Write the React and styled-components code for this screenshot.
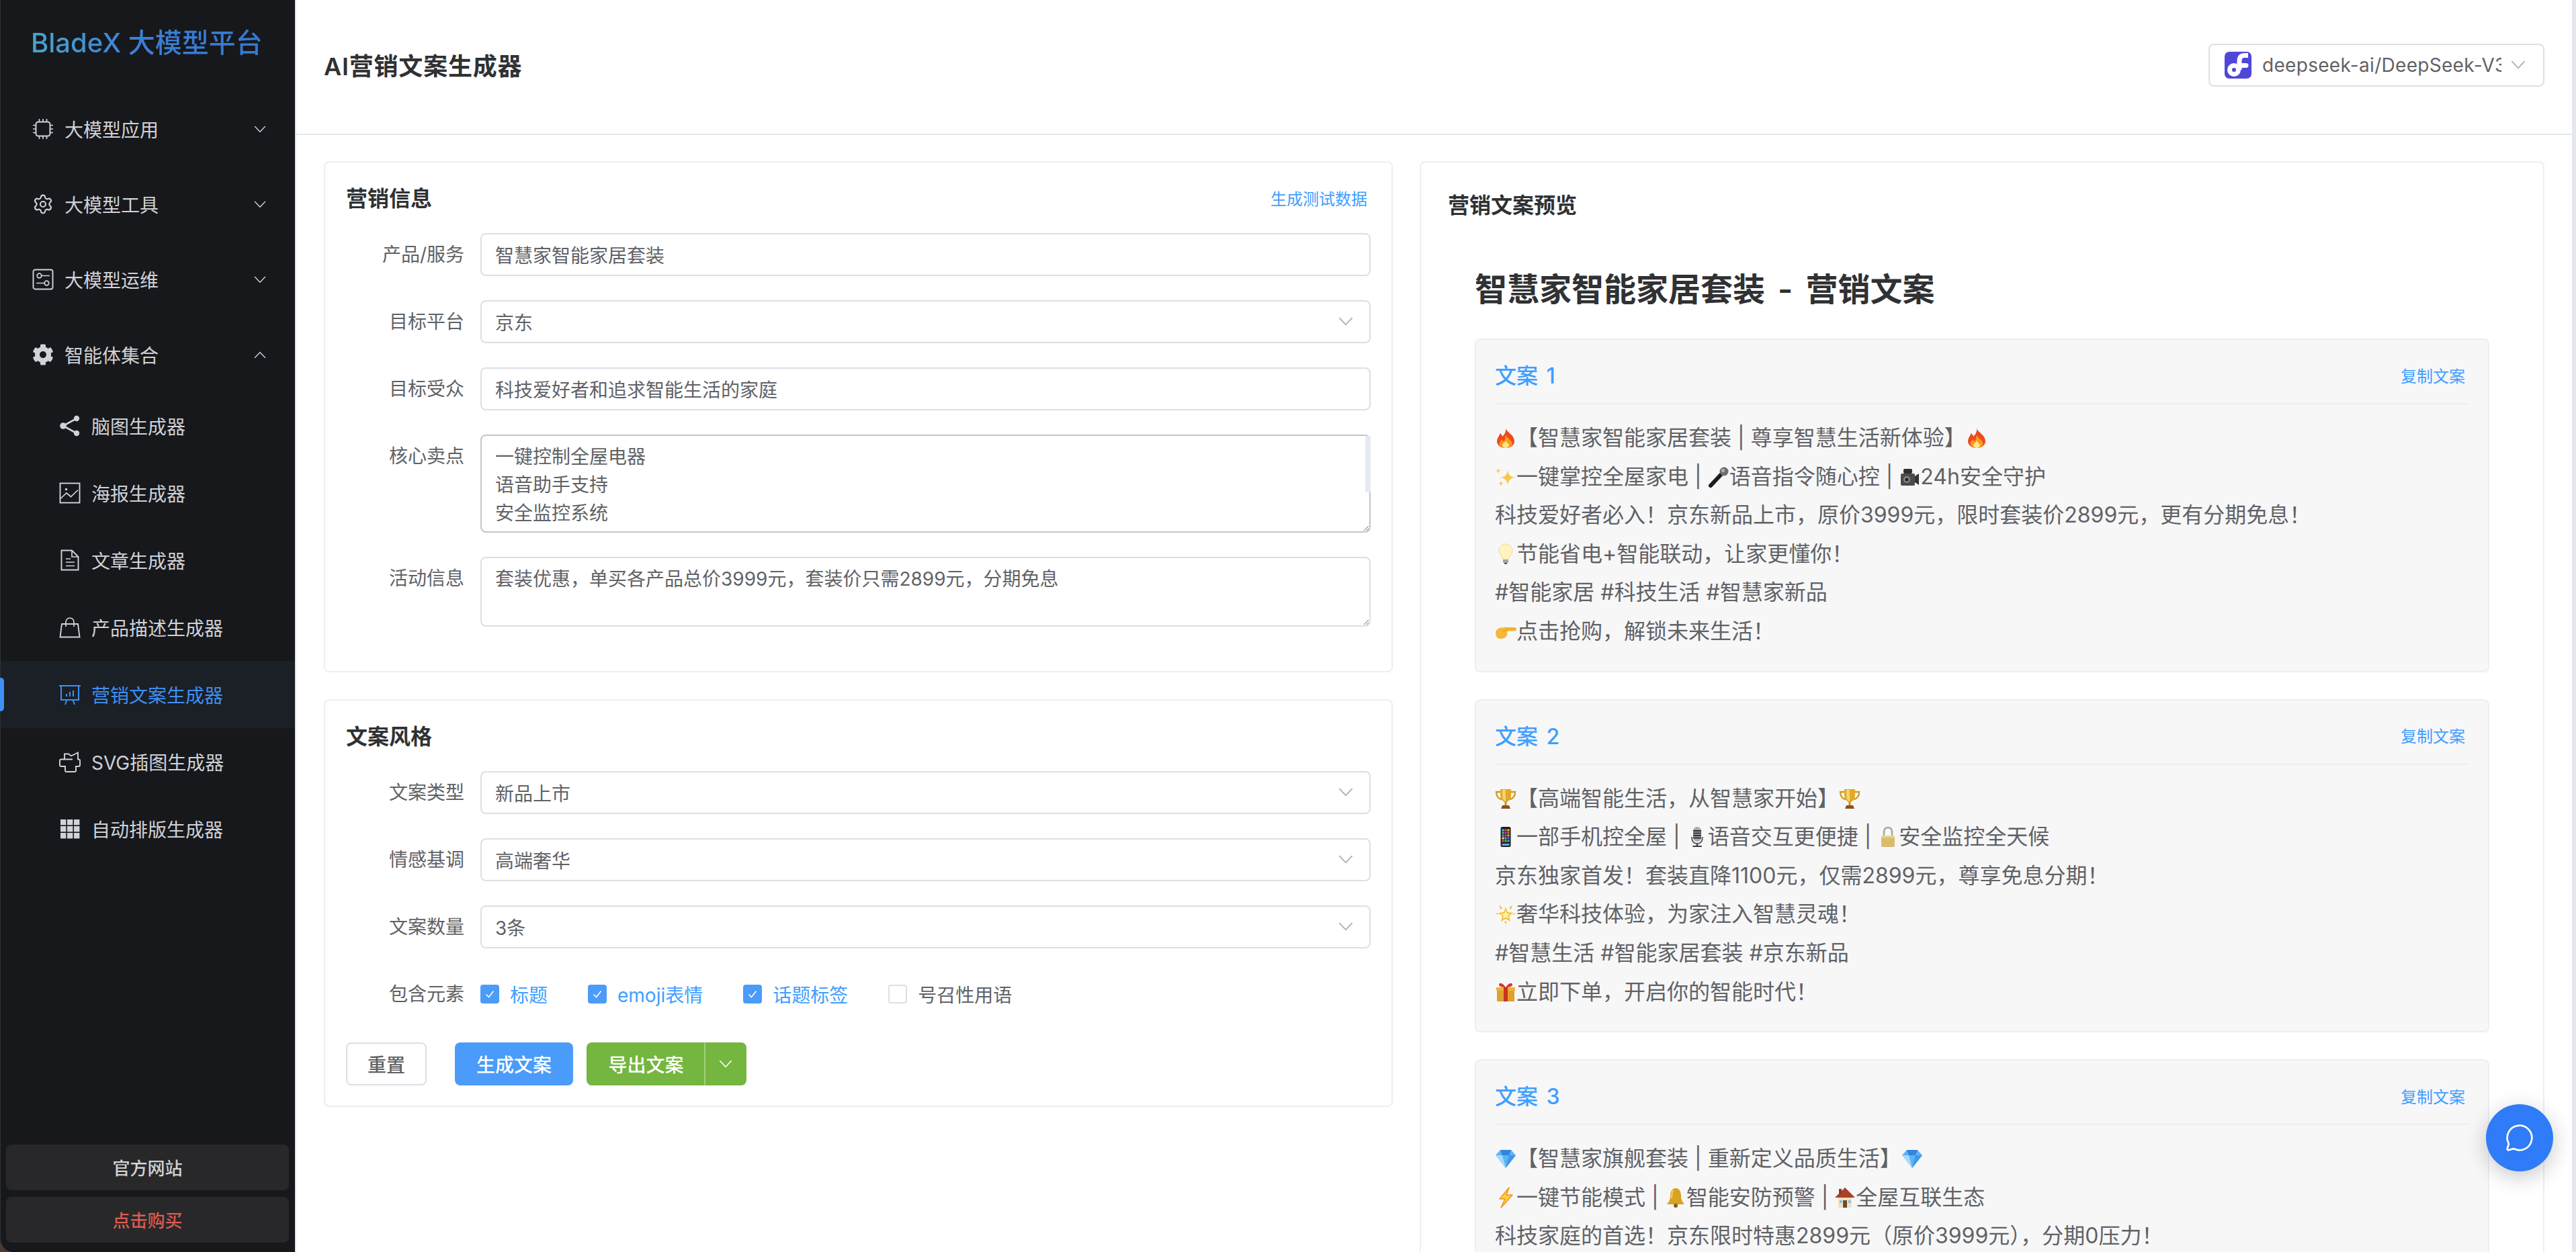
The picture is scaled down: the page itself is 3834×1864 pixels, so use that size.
import React from 'react';
import styled, { createGlobalStyle } from 'styled-components';
import { Settings, MessageCircle } from 'lucide-react';
import { FaCog } from 'react-icons/fa';

const FONT = `Inter, "Noto Sans CJK SC", "Noto Sans", sans-serif`;

const Global = createGlobalStyle`
  html, body { margin: 0; padding: 0; height: 100%; overflow: hidden; background: #fff; }
  body { font-family: ${FONT}; color: #606266; }
  #root { height: 100%; }
  * { box-sizing: border-box; }
`;

const Shell = styled.div`
  display: flex;
  height: 100vh;
  overflow: hidden;
  background: #e4e7ee;
`;
const SideFrame = styled.div`
  flex: 0 0 439px;
  margin-right: 2px;
  background: #4a3a30;
  display: flex;
`;
const Sidebar = styled.aside`
  flex: 1;
  display: flex;
  flex-direction: column;
  background: #17181b;
  border-left: 1px solid #303135;
  border-bottom-left-radius: 20px;
  min-width: 0;
`;
const Logo = styled.div`
  height: 136px;
  padding: 40px 0 0 45px;
  font-size: 40px;
  line-height: 48px;
  font-weight: 500;
  white-space: nowrap;
  span {
    background: linear-gradient(90deg, #4aa5cc 0%, #3b80d6 45%, #3478d2 100%);
    -webkit-background-clip: text;
    background-clip: text;
    color: transparent;
  }
`;
const NavItem = styled.div`
  height: 112px;
  display: flex;
  align-items: center;
  gap: 16px;
  padding: 0 43px 0 47px;
  font-size: 28px;
  color: #cfd2d8;
`;
const SubItem = styled.div`
  position: relative;
  height: 100px;
  display: flex;
  align-items: center;
  gap: 16px;
  padding-left: 87px;
  font-size: 28px;
  color: ${p => (p.$active ? '#3d90f5' : '#cfd2d8')};
  background: ${p => (p.$active ? '#1b1f26' : 'transparent')};
  ${p =>
    p.$active &&
    `&::before {
      content: '';
      position: absolute;
      left: -1px;
      top: 25px;
      width: 6px;
      height: 50px;
      border-radius: 0 5px 5px 0;
      background: #3f8ff7;
    }`}
`;
const NavIcon = styled.span`
  flex: 0 0 32px;
  width: 32px;
  height: 32px;
  display: flex;
  svg { display: block; width: 32px; height: 32px; }
`;
const NavCaret = styled.span`
  margin-left: auto;
  display: flex;
`;
const SideFooter = styled.div`
  margin-top: auto;
  padding: 0 9px 14px 8px;
  display: flex;
  flex-direction: column;
  gap: 10px;
`;
const SideButton = styled.div`
  height: 68px;
  padding-bottom: 2px;
  border-radius: 8px;
  background: #28282b;
  display: flex;
  align-items: center;
  justify-content: center;
  font-size: 26px;
  font-weight: 500;
  color: ${p => (p.$danger ? '#dc5a50' : '#d2d2d2')};
`;

const Main = styled.main`
  flex: 1;
  min-width: 0;
  margin-right: 6px;
  background: #fff;
  display: flex;
  flex-direction: column;
`;
const Header = styled.header`
  flex: 0 0 201px;
  border-bottom: 2px solid #e4e7ee;
  padding: 0 41px;
  display: flex;
  align-items: center;
  justify-content: space-between;
`;
const PageTitle = styled.h1`
  margin: 0 0 2px;
  font-size: 36px;
  line-height: 48px;
  font-weight: 600;
  letter-spacing: 0.8px;
  color: #303133;
`;
const ModelSelect = styled.div`
  width: 500px;
  height: 64px;
  margin-bottom: 6px;
  border: 2px solid #dcdfe6;
  border-radius: 8px;
  display: flex;
  align-items: center;
  padding: 0 26px 0 22px;
  font-size: 28px;
  color: #606266;
`;
const ModelName = styled.span`
  flex: 0 0 356px;
  margin-left: 16px;
  overflow: hidden;
  white-space: nowrap;
  font-size: 28px;
  letter-spacing: 0.3px;
`;
const ModelCaret = styled.span`
  margin-left: auto;
  display: flex;
`;
const Content = styled.div`
  flex: 1;
  min-height: 0;
  padding: 39px 41px 0;
  display: grid;
  grid-template-columns: 1591px minmax(0, 1fr);
  column-gap: 40px;
  align-items: start;
`;
const Column = styled.div`
  display: flex;
  flex-direction: column;
  gap: 40px;
`;
const Card = styled.section`
  border: 2px solid #ebeef5;
  border-radius: 8px;
  background: #fff;
  padding: 30px 31px;
`;
const CardHead = styled.div`
  height: 44px;
  margin-bottom: 31px;
  display: flex;
  align-items: center;
  justify-content: space-between;
`;
const CardTitle = styled.h2`
  margin: 0;
  padding-top: 3px;
  font-size: 32px;
  line-height: 44px;
  font-weight: 600;
  color: #303133;
`;
const LinkText = styled.a`
  font-size: 24px;
  color: #409eff;
  margin-right: ${p => p.$inset || 0}px;
`;
const FormRow = styled.div`
  display: flex;
  align-items: flex-start;
  margin-bottom: ${p => p.$mb ?? 36}px;
`;
const Label = styled.label`
  flex: 0 0 200px;
  padding-right: 24px;
  text-align: right;
  font-size: 28px;
  line-height: 64px;
  color: #606266;
`;
const TextInput = styled.input`
  flex: 1;
  min-width: 0;
  height: 64px;
  border: 2px solid #dcdfe6;
  border-radius: 8px;
  padding: 0 20px;
  font: 28px ${FONT};
  color: #606266;
  background: #fff;
  outline: none;
`;
const SelectBox = styled.div`
  flex: 1;
  min-width: 0;
  height: 64px;
  border: 2px solid #dcdfe6;
  border-radius: 8px;
  padding: 0 24px 0 20px;
  display: flex;
  align-items: center;
  justify-content: space-between;
  font-size: 28px;
  color: #606266;
`;
const AreaWrap = styled.div`
  position: relative;
  flex: 1;
  min-width: 0;
  display: flex;
`;
const TextArea = styled.textarea`
  flex: 1;
  min-width: 0;
  display: block;
  height: ${p => p.$h}px;
  border: 2px solid ${p => p.$border};
  border-radius: 8px;
  padding: 10px 20px;
  font: 28px/42px ${FONT};
  color: #606266;
  background: #fff;
  outline: none;
  overflow: hidden;
  resize: vertical;
`;
const AreaThumb = styled.span`
  position: absolute;
  top: 2px;
  right: 0;
  width: 8px;
  height: 84px;
  background: #e6eaf3;
`;
const CheckRow = styled.div`
  flex: 1;
  height: 64px;
  display: flex;
  align-items: center;
  gap: 60px;
`;
const CheckItem = styled.div`
  display: flex;
  align-items: center;
  gap: 16px;
  font-size: 28px;
  color: ${p => (p.$on ? '#409eff' : '#606266')};
`;
const CheckBox = styled.span`
  width: 28px;
  height: 28px;
  border-radius: 4px;
  border: 2px solid ${p => (p.$on ? '#4b9bfa' : '#dcdfe6')};
  background: ${p => (p.$on ? '#4b9bfa' : '#fff')};
  display: flex;
  align-items: center;
  justify-content: center;
`;
const ActionRow = styled.div`
  display: flex;
  align-items: center;
`;
const Btn = styled.button`
  height: 64px;
  padding: 0 ${p => p.$pad || 30}px;
  margin: 0 ${p => p.$mr || 0}px 0 0;
  border: 2px solid ${p => p.$bd || 'transparent'};
  border-radius: 8px;
  background: ${p => p.$bg || '#fff'};
  color: ${p => p.$fg || '#fff'};
  font: 500 28px ${FONT};
  display: flex;
  align-items: center;
`;
const SplitMain = styled(Btn)`
  width: 175px;
  justify-content: center;
  padding: 0;
  border-radius: 8px 0 0 8px;
  border-right: 0;
`;
const SplitArrow = styled(Btn)`
  width: 63px;
  justify-content: center;
  padding: 0;
  border-radius: 0 8px 8px 0;
  border-left: 2px solid #a3d07f;
`;
const PreviewCard = styled.section`
  border: 2px solid #ebeef5;
  border-radius: 8px 8px 0 0;
  background: #fff;
  padding: 40px 40px 0;
`;
const PreviewTitle = styled.h2`
  margin: 0 0 69px;
  height: 44px;
  padding-top: 2px;
  font-size: 32px;
  line-height: 44px;
  font-weight: 600;
  color: #303133;
`;
const Preview = styled.div`
  padding: 0 40px;
`;
const PreviewHeading = styled.h1`
  margin: 0 0 37px;
  font-size: 48px;
  line-height: 72px;
  font-weight: 600;
  word-spacing: 7px;
  color: #303133;
`;
const Copy = styled.article`
  border: 2px solid #ebeef5;
  border-radius: 8px;
  background: #f7f7f8;
  padding: 30px 28px;
  margin-bottom: 40px;
`;
const CopyHead = styled.div`
  height: 66px;
  padding-bottom: 20px;
  border-bottom: 2px solid #ebeef5;
  margin-bottom: 21px;
  display: flex;
  align-items: center;
  justify-content: space-between;
`;
const CopyTitle = styled.h3`
  margin: 0;
  padding-top: 4px;
  font-size: 32px;
  line-height: 42px;
  font-weight: 500;
  word-spacing: 4px;
  color: #409eff;
`;
const CopyLine = styled.div`
  font-size: 32px;
  line-height: 57.6px;
  height: 57.6px;
  color: #606266;
  white-space: pre;
`;
const EmojiSvg = styled.svg`
  display: inline-block;
  width: 32px;
  height: 32px;
  vertical-align: -5px;
`;
const ChatFab = styled.button`
  position: fixed;
  left: 3700px;
  top: 1644px;
  width: 100px;
  height: 100px;
  border: 0;
  border-radius: 50%;
  background: #2f7bf8;
  box-shadow: 0 8px 32px rgba(0, 0, 0, 0.22);
  display: flex;
  align-items: center;
  justify-content: center;
`;

const Caret = ({ up, size = 18, color = '#cfd2d8' }) => (
  <svg width={size} height={size * 0.6} viewBox="0 0 18 11" fill="none" stroke={color} strokeWidth="1.4">
    <polyline points={up ? '1,10 9,1.5 17,10' : '1,1 9,9.5 17,1'} />
  </svg>
);
const SelectCaret = () => <Caret size={22} color="#a8abb2" />;

const Line = props => <svg viewBox="0 0 32 32" fill="none" stroke="currentColor" strokeWidth="1.7" {...props} />;

const IconCpu = () => (
  <Line>
    <rect x="5.5" y="5.5" width="21" height="21" rx="3.5" strokeWidth="2" />
    <path d="M10.5 1v4M16 1v4M21.5 1v4M10.5 27v4M16 27v4M21.5 27v4M1 10.5h4M1 16h4M1 21.5h4M27 10.5h4M27 16h4M27 21.5h4" />
  </Line>
);
const IconOps = () => (
  <Line>
    <rect x="1.5" y="1.5" width="29" height="29" rx="3" strokeWidth="1.9" />
    <circle cx="10.5" cy="10.5" r="3.3" />
    <path d="M14 10.5h12M6 21.5h12" />
    <circle cx="21.5" cy="21.5" r="3.3" />
  </Line>
);
const IconShare = () => (
  <Line strokeWidth="2.6">
    <path d="M26 5L6 16L26 27" />
    <circle cx="26" cy="5" r="4.2" fill="currentColor" stroke="none" />
    <circle cx="6" cy="16" r="4.8" fill="currentColor" stroke="none" />
    <circle cx="26" cy="27" r="4.2" fill="currentColor" stroke="none" />
  </Line>
);
const IconPicture = () => (
  <Line>
    <rect x="1.5" y="1.5" width="29" height="29" strokeWidth="1.9" />
    <circle cx="10.5" cy="10.5" r="1.8" fill="currentColor" stroke="none" />
    <path d="M2 24.5L11 16l6.5 5.5L28 11.5" />
  </Line>
);
const IconDoc = () => (
  <Line>
    <path d="M3.5 1.5H19L28.5 11V30.5H3.5Z" strokeWidth="1.9" />
    <path d="M19 1.5V11H28.5M10 14h7M10 19h13M10 24.5h13" />
  </Line>
);
const IconBag = () => (
  <Line>
    <path d="M4 11H28L30.5 30.5H1.5Z" strokeWidth="1.9" />
    <path d="M10 15V8a6 6 0 0 1 12 0v7" />
  </Line>
);
const IconBoard = () => (
  <Line strokeWidth="2">
    <path d="M0 3H32M3 3V24H29V3M11.5 24L9 31M20.5 24L23 31" />
    <path d="M11 19v-4M16 19v-7M21 19v-9" />
  </Line>
);
const IconBox = () => (
  <Line strokeWidth="1.9">
    <path d="M8 12V4.5H14L18 7.5L28 2.5V12.5H29Q31 12.5 31 14.5V21Q31 23 29 23H25V29Q25 31 23 31H11Q9 31 9 29V23H3Q1 23 1 21V14.5Q1 12.5 3 12.5H20" />
  </Line>
);
const IconGrid = () => (
  <svg viewBox="0 0 32 32" fill="currentColor">
    {[2, 12, 22].flatMap(y =>
      [2, 12, 22].map(x => <rect key={`${x}-${y}`} x={x} y={y} width="8.4" height="8.4" />)
    )}
  </svg>
);

const SiliconLogo = () => (
  <svg width="40" height="40" viewBox="0 0 40 40">
    <rect width="40" height="40" rx="7" fill="#5046d8" />
    <path d="M35 5.500H30C24.500 5.500 22 8 22 14V27" fill="none" stroke="#fff" strokeWidth="7" />
    <path d="M22 20.500H32" stroke="#fff" strokeWidth="7" strokeLinecap="round" fill="none" />
    <circle cx="14" cy="27" r="6.500" fill="none" stroke="#fff" strokeWidth="7" />
  </svg>
);

const starPath = (cx, cy, r) =>
  `M${cx} ${cy - r}Q${cx} ${cy} ${cx + r} ${cy}Q${cx} ${cy} ${cx} ${cy + r}Q${cx} ${cy} ${cx - r} ${cy}Q${cx} ${cy} ${cx} ${cy - r}Z`;

const EMOJI = {
  fire: (
    <g transform="translate(16 16) scale(1.18 1) translate(-16 -16)">
      <path fill="#ec4b1c" d="M16 1C17 8 27 11 27 21C27 27 22 31 16 31C10 31 5 27 5 21C5 16 8 13 9 9C11 11 12 13 12 14C14 11 17 7 16 1Z" />
      <path fill="#fb9a1e" d="M16 11C17 16 24 19 24 25C24 28 20 31 16 31C12 31 8 28 8 25C8 22 10 20 11 18C12 20 13 21 14 21C15 18 16 15 16 11Z" />
      <path fill="#ffe58a" d="M16 20C17 23 20 24 20 27C20 29 18 31 16 31C14 31 12 29 12 27C12 24 15 23 16 20Z" />
    </g>
  ),
  sparkles: (
    <>
      <path fill="#f6c945" d={starPath(19, 17, 13)} />
      <path fill="#f6cf58" d={starPath(5, 7, 5)} />
      <path fill="#f6cf58" d={starPath(9, 26, 5)} />
    </>
  ),
  mic: (
    <>
      <path d="M4 29L19 13" stroke="#1c1c1e" strokeWidth="6" strokeLinecap="round" />
      <circle cx="24" cy="8" r="6.5" fill="#6f6f72" />
      <circle cx="22.5" cy="6.5" r="2.5" fill="#b5b5b8" />
    </>
  ),
  video: (
    <>
      <rect x="3" y="11" width="21" height="18" rx="2" fill="#4b4b4e" />
      <rect x="7" y="4" width="13" height="7" rx="2" fill="#2f2f32" />
      <path d="M24 15L30 11V28L24 24Z" fill="#333" />
      <circle cx="12" cy="20" r="5" fill="#87898c" />
      <circle cx="12" cy="20" r="2.6" fill="#222" />
    </>
  ),
  bulb: (
    <>
      <path d="M16 1C10 1 6 5.500 6 11C6 16 11 19 12 24H20C21 19 26 16 26 11C26 5.500 22 1 16 1Z" fill="#fff4bd" stroke="#e8dca0" />
      <rect x="12" y="24" width="8" height="5" rx="1" fill="#a4a4a6" />
      <rect x="14" y="29" width="4" height="2" fill="#58585a" />
    </>
  ),
  hand: (
    <>
      <rect x="12" y="10" width="20" height="5.400" rx="2.700" fill="#f0b431" />
      <path d="M1 18C1 14 5 11 10 10L16 12C19 14 19 16 18 18C19 20 18 22 17 23C16 26 12 27 8 27C3 27 1 23 1 18Z" fill="#f5b73a" />
      <path d="M12 15H18" stroke="#d99a22" strokeWidth="1" />
    </>
  ),
  trophy: (
    <>
      <path d="M8 6H2C2 13 5 16 10 17M24 6H30C30 13 27 16 22 17" fill="none" stroke="#d19a22" strokeWidth="2.300" />
      <path d="M8 2H24V11C24 17 20 21 16 21C12 21 8 17 8 11Z" fill="#e3a827" />
      <path d="M11 3H16V20C12 19 11 15 11 11Z" fill="#f5d36b" />
      <rect x="14.500" y="20" width="3" height="6" fill="#c88f1e" />
      <path d="M9 31L11 26H21L23 31Z" fill="#8e4f1e" />
    </>
  ),
  phone: (
    <>
      <rect x="8.500" y="1" width="15" height="30" rx="2.500" fill="#1f1f21" />
      {['#4fc3f7', '#ef5350', '#ffca28', '#66bb6a', '#ab47bc', '#ff7043', '#42a5f5', '#ec407a', '#9ccc65', '#ffee58', '#26c6da', '#7e57c2', '#ef5350', '#66bb6a', '#29b6f6'].map((c, i) => (
        <rect key={i} x={10.5 + (i % 3) * 4} y={4.5 + Math.floor(i / 3) * 4} width="3" height="3" fill={c} />
      ))}
      <rect x="10.500" y="26" width="11" height="3" fill="#5ea8e8" />
    </>
  ),
  studio: (
    <>
      <path d="M8 16C8 23 11 26 16 26C21 26 24 23 24 16" fill="none" stroke="#55565a" strokeWidth="1.800" />
      <rect x="10" y="1" width="12" height="22" rx="6" fill="#a9abaf" />
      <path d="M10 7H22M10 10.500H22M10 14H22M10 17.500H22" stroke="#2c2d30" strokeWidth="1.800" />
      <rect x="14.500" y="26" width="3" height="3" fill="#55565a" />
      <rect x="9" y="29" width="14" height="2" rx="1" fill="#3c3d40" />
    </>
  ),
  lock: (
    <>
      <path d="M10 15V8a6 6 0 0 1 12 0v7" fill="none" stroke="#a7a8a6" strokeWidth="2.600" />
      <rect x="6" y="14" width="20" height="17" rx="2" fill="#d8bd6f" />
      <rect x="6" y="14" width="20" height="3" fill="#e9d68f" />
    </>
  ),
  star: (
    <>
      <path fill="#f5c22f" d="M16 7L19 14L27 15L21 20L23 28L16 24L9 28L11 20L5 15L13 14Z" transform="translate(0 -1)" />
      <path fill="#fff1a6" d="M16 11L18 16L23 16.500L19 19.500L20 24L16 21.500L12 24L13 19.500L9 16.500L14 16Z" transform="translate(0 -1)" />
      <path fill="#f5c22f" d="M6 2L11 7L8 9ZM26 2L21 7L24 9ZM1 14L6 15.500L4 17ZM31 14L26 15.500L28 17ZM16 31L14 27H18Z" />
    </>
  ),
  gift: (
    <>
      <rect x="3" y="12" width="26" height="18" rx="1" fill="#e0a02c" />
      <rect x="2" y="9" width="28" height="5" fill="#eab03e" />
      <rect x="13" y="9" width="6" height="21" fill="#c8331f" />
      <path d="M16 9C12 2 6 1 6 5C6 8 11 9 16 9C21 9 26 8 26 5C26 1 20 2 16 9Z" fill="#d23c27" />
    </>
  ),
  gem: (
    <>
      <path d="M1 11L8 3H24L31 11L16 30Z" fill="#5fb2f3" />
      <path d="M8 3L11 11H21L24 3Z" fill="#2f86dc" />
      <path d="M1 11H11L16 30Z" fill="#a8dafc" />
      <path d="M31 11H21L16 30Z" fill="#3f98e6" />
    </>
  ),
  bolt: <path d="M21 1L7 18H15L9 31L26 12H17Z" fill="#ffcf3e" stroke="#f29216" strokeWidth="1.500" strokeLinejoin="round" />,
  bell: (
    <>
      <path d="M16 2C10 2 8 8 8 14C8 20 5 23 3 26H29C27 23 24 20 24 14C24 8 22 2 16 2Z" fill="#d9a221" />
      <path d="M13 5C10 7 10 13 10 17" stroke="#f2d26d" strokeWidth="2" fill="none" />
      <circle cx="16" cy="28" r="3" fill="#8b5a12" />
    </>
  ),
  house: (
    <>
      <rect x="6" y="15" width="20" height="16" fill="#f2e2bd" />
      <path d="M16 1L31 16H1Z" fill="#a8412c" />
      <rect x="7" y="3" width="4" height="8" fill="#8f3a28" />
      <rect x="13" y="20" width="6" height="11" fill="#6e4a33" />
      <rect x="8" y="20" width="3.500" height="4" fill="#7cc0e8" />
      <rect x="21" y="20" width="3.500" height="4" fill="#7cc0e8" />
    </>
  )
};

const E = ({ n }) => (
  <EmojiSvg viewBox="0 0 32 32" role="img" aria-label={n}>
    {EMOJI[n]}
  </EmojiSvg>
);

const COPIES = [
  {
    title: '文案 1',
    lines: [
      [<E n="fire" key="a" />, '【智慧家智能家居套装 | 尊享智慧生活新体验】', <E n="fire" key="b" />],
      [<E n="sparkles" key="a" />, '一键掌控全屋家电 | ', <E n="mic" key="b" />, '语音指令随心控 | ', <E n="video" key="c" />, '24h安全守护'],
      ['科技爱好者必入！京东新品上市，原价3999元，限时套装价2899元，更有分期免息！'],
      [<E n="bulb" key="a" />, '节能省电+智能联动，让家更懂你！'],
      ['#智能家居 #科技生活 #智慧家新品'],
      [<E n="hand" key="a" />, '点击抢购，解锁未来生活！']
    ]
  },
  {
    title: '文案 2',
    lines: [
      [<E n="trophy" key="a" />, '【高端智能生活，从智慧家开始】', <E n="trophy" key="b" />],
      [<E n="phone" key="a" />, '一部手机控全屋 | ', <E n="studio" key="b" />, '语音交互更便捷 | ', <E n="lock" key="c" />, '安全监控全天候'],
      ['京东独家首发！套装直降1100元，仅需2899元，尊享免息分期！'],
      [<E n="star" key="a" />, '奢华科技体验，为家注入智慧灵魂！'],
      ['#智慧生活 #智能家居套装 #京东新品'],
      [<E n="gift" key="a" />, '立即下单，开启你的智能时代！']
    ]
  },
  {
    title: '文案 3',
    lines: [
      [<E n="gem" key="a" />, '【智慧家旗舰套装 | 重新定义品质生活】', <E n="gem" key="b" />],
      [<E n="bolt" key="a" />, '一键节能模式 | ', <E n="bell" key="b" />, '智能安防预警 | ', <E n="house" key="c" />, '全屋互联生态'],
      ['科技家庭的首选！京东限时特惠2899元（原价3999元），分期0压力！']
    ]
  }
];

const GROUPS = [
  { label: '大模型应用', icon: <IconCpu /> },
  { label: '大模型工具', icon: <Settings strokeWidth={1.6} /> },
  { label: '大模型运维', icon: <IconOps /> },
  { label: '智能体集合', icon: <FaCog />, open: true }
];
const SUBS = [
  { label: '脑图生成器', icon: <IconShare /> },
  { label: '海报生成器', icon: <IconPicture /> },
  { label: '文章生成器', icon: <IconDoc /> },
  { label: '产品描述生成器', icon: <IconBag /> },
  { label: '营销文案生成器', icon: <IconBoard />, active: true },
  { label: 'SVG插图生成器', icon: <IconBox /> },
  { label: '自动排版生成器', icon: <IconGrid /> }
];
const STYLE_SELECTS = [
  ['文案类型', '新品上市'],
  ['情感基调', '高端奢华'],
  ['文案数量', '3条']
];
const CHECKS = [
  ['标题', true],
  ['emoji表情', true],
  ['话题标签', true],
  ['号召性用语', false]
];

export default function App() {
  return (
    <>
      <Global />
      <Shell>
        <SideFrame>
          <Sidebar>
            <Logo>
              <span>BladeX 大模型平台</span>
            </Logo>
            <nav>
              {GROUPS.map(g => (
                <NavItem key={g.label}>
                  <NavIcon>{g.icon}</NavIcon>
                  {g.label}
                  <NavCaret>
                    <Caret up={g.open} />
                  </NavCaret>
                </NavItem>
              ))}
              {SUBS.map(s => (
                <SubItem key={s.label} $active={s.active}>
                  <NavIcon>{s.icon}</NavIcon>
                  {s.label}
                </SubItem>
              ))}
            </nav>
            <SideFooter>
              <SideButton>官方网站</SideButton>
              <SideButton $danger>点击购买</SideButton>
            </SideFooter>
          </Sidebar>
        </SideFrame>
        <Main>
          <Header>
            <PageTitle>AI营销文案生成器</PageTitle>
            <ModelSelect>
              <SiliconLogo />
              <ModelName>deepseek-ai/DeepSeek-V3</ModelName>
              <ModelCaret>
                <SelectCaret />
              </ModelCaret>
            </ModelSelect>
          </Header>
          <Content>
            <Column>
              <Card>
                <CardHead>
                  <CardTitle>营销信息</CardTitle>
                  <LinkText $inset={5}>生成测试数据</LinkText>
                </CardHead>
                <FormRow>
                  <Label>产品/服务</Label>
                  <TextInput readOnly value="智慧家智能家居套装" />
                </FormRow>
                <FormRow>
                  <Label>目标平台</Label>
                  <SelectBox>
                    京东
                    <SelectCaret />
                  </SelectBox>
                </FormRow>
                <FormRow>
                  <Label>目标受众</Label>
                  <TextInput readOnly value="科技爱好者和追求智能生活的家庭" />
                </FormRow>
                <FormRow>
                  <Label>核心卖点</Label>
                  <AreaWrap>
                    <TextArea
                      readOnly
                      $h={146}
                      $border="#c2c5cc"
                      value={'一键控制全屋电器\n语音助手支持\n安全监控系统\n节能省电模式'}
                    />
                    <AreaThumb />
                  </AreaWrap>
                </FormRow>
                <FormRow>
                  <Label>活动信息</Label>
                  <AreaWrap>
                    <TextArea
                      readOnly
                      $h={104}
                      $border="#dcdfe6"
                      value="套装优惠，单买各产品总价3999元，套装价只需2899元，分期免息"
                    />
                  </AreaWrap>
                </FormRow>
              </Card>
              <Card>
                <CardHead>
                  <CardTitle>文案风格</CardTitle>
                </CardHead>
                {STYLE_SELECTS.map(([label, value]) => (
                  <FormRow key={label}>
                    <Label>{label}</Label>
                    <SelectBox>
                      {value}
                      <SelectCaret />
                    </SelectBox>
                  </FormRow>
                ))}
                <FormRow $mb={40}>
                  <Label>包含元素</Label>
                  <CheckRow>
                    {CHECKS.map(([label, on]) => (
                      <CheckItem key={label} $on={on}>
                        <CheckBox $on={on}>
                          {on && (
                            <svg width="16" height="16" viewBox="0 0 16 16" fill="none" stroke="#fff" strokeWidth="1.6">
                              <polyline points="2.500,8.500 6.500,12.500 13.500,3.500" />
                            </svg>
                          )}
                        </CheckBox>
                        {label}
                      </CheckItem>
                    ))}
                  </CheckRow>
                </FormRow>
                <ActionRow>
                  <Btn $bg="#fff" $fg="#606266" $bd="#dcdfe6" $pad={30} $mr={42}>
                    重置
                  </Btn>
                  <Btn $bg="#4b9bfa" $pad={30} $mr={20}>
                    生成文案
                  </Btn>
                  <SplitMain $bg="#74b63f">导出文案</SplitMain>
                  <SplitArrow $bg="#74b63f">
                    <Caret size={20} color="#fff" />
                  </SplitArrow>
                </ActionRow>
              </Card>
            </Column>
            <PreviewCard>
              <PreviewTitle>营销文案预览</PreviewTitle>
              <Preview>
                <PreviewHeading>智慧家智能家居套装 - 营销文案</PreviewHeading>
                {COPIES.map(c => (
                  <Copy key={c.title}>
                    <CopyHead>
                      <CopyTitle>{c.title}</CopyTitle>
                      <LinkText $inset={6}>复制文案</LinkText>
                    </CopyHead>
                    {c.lines.map((l, i) => (
                      <CopyLine key={i}>{l}</CopyLine>
                    ))}
                  </Copy>
                ))}
              </Preview>
            </PreviewCard>
          </Content>
        </Main>
      </Shell>
      <ChatFab aria-label="chat">
        <MessageCircle size={44} color="#fff" strokeWidth={1.5} />
      </ChatFab>
    </>
  );
}
